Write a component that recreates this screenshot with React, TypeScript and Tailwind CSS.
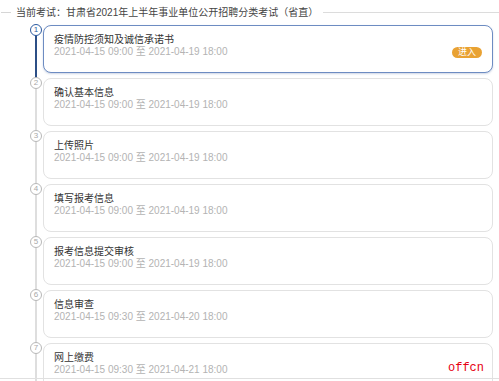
const steps = [
  { title: "疫情防控须知及诚信承诺书", start: "2021-04-15 09:00", end: "2021-04-19 18:00" },
  { title: "确认基本信息", start: "2021-04-15 09:00", end: "2021-04-19 18:00" },
  { title: "上传照片", start: "2021-04-15 09:00", end: "2021-04-19 18:00" },
  { title: "填写报考信息", start: "2021-04-15 09:00", end: "2021-04-19 18:00" },
  { title: "报考信息提交审核", start: "2021-04-15 09:00", end: "2021-04-19 18:00" },
  { title: "信息审查", start: "2021-04-15 09:30", end: "2021-04-20 18:00" },
  { title: "网上缴费", start: "2021-04-15 09:30", end: "2021-04-21 18:00" },
];

const font = { fontFamily: '"Liberation Sans", "Noto Sans CJK SC", sans-serif' };

export default function App() {
  return (
    <div className="relative h-[381px] overflow-hidden bg-white" style={font}>
      <header className="flex h-[25px] items-center">
        <span className="ml-px h-px w-[10px] bg-[#d6d6d6]" />
        <span className="px-[5px] text-[10px] leading-none text-[#444]">
          当前考试：甘肃省2021年上半年事业单位公开招聘分类考试（省直）
        </span>
        <span className="h-px flex-1 bg-[#dcdcdc]" />
      </header>

      <ol className="flex flex-col gap-[5px] pr-[6px]">
        {steps.map((s, i) => {
          const active = i === 0;
          return (
            <li key={s.title} className="relative flex">
              <div className="relative w-[43px] shrink-0">
                <span
                  className={
                    active
                      ? "absolute left-[35px] top-[4px] bottom-[-9px] w-[2px] bg-[#2c4f86]"
                      : "absolute left-[35px] top-[4px] bottom-[-9px] w-[2px] bg-[#dedede]"
                  }
                />
                <span
                  className={
                    active
                      ? "absolute left-[30px] top-[-1px] flex h-[12px] w-[12px] items-center justify-center rounded-full border border-[#2c5aa0] bg-white text-[8px] leading-none text-[#2c5aa0]"
                      : "absolute left-[30px] top-[-1px] flex h-[12px] w-[12px] items-center justify-center rounded-full border border-[#b8b8b8] bg-white text-[8px] leading-none text-[#a8a8a8]"
                  }
                >
                  {i + 1}
                </span>
              </div>
              <div
                className={
                  active
                    ? "flex h-[48px] flex-1 items-start justify-between rounded-[8px] border border-[#6d8cc2] bg-white pl-[10px] pr-[10px] pt-[8px] shadow-[0_1px_2px_rgba(60,90,150,0.25)]"
                    : "flex h-[48px] flex-1 items-start justify-between rounded-[8px] border border-[#e2e2e2] bg-white pl-[10px] pr-[10px] pt-[8px]"
                }
              >
                <div>
                  <div className="text-[10px] leading-[12px] text-[#333]">{s.title}</div>
                  <div className="text-[10px] leading-[12px] text-[#b3b3b3]">
                    {s.start} 至 {s.end}
                  </div>
                </div>
                {active && (
                  <span className="mt-[13px] rounded-full bg-[#e9a233] px-[6px] text-[9px] leading-[11px] text-white">
                    进入
                  </span>
                )}
              </div>
            </li>
          );
        })}
      </ol>

      <div className="absolute bottom-[2px] left-0 right-0 h-px bg-[#e0e0e0]" />
      <span
        className="absolute bottom-[7px] right-[15px] text-[12px] leading-none text-[#e60012]"
        style={{ fontFamily: '"Liberation Mono", monospace' }}
      >
        offcn
      </span>
    </div>
  );
}
